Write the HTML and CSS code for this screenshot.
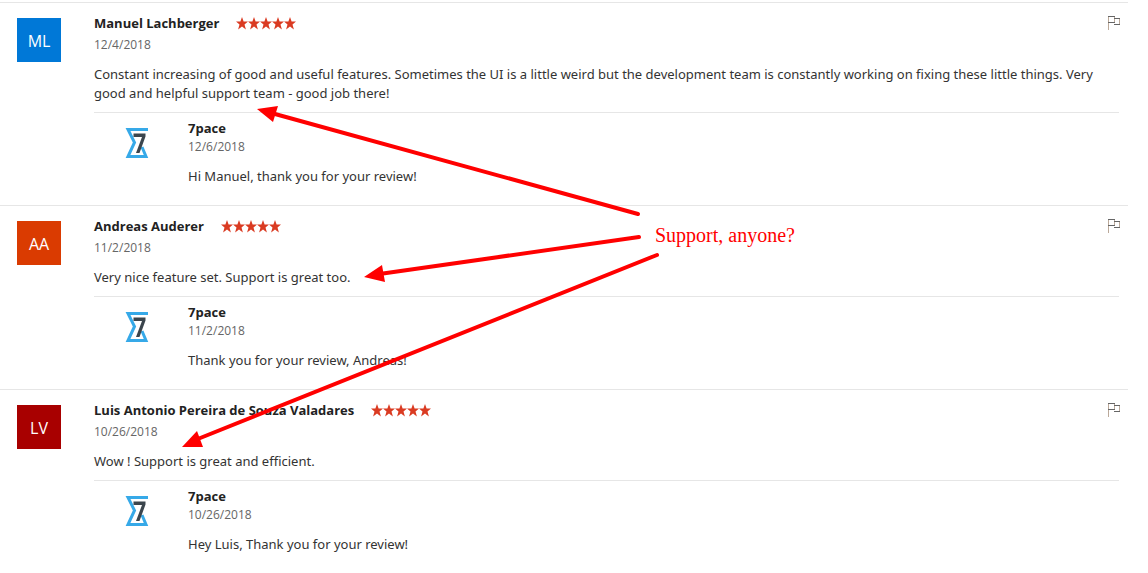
FILE: index.html
```html
<!DOCTYPE html>
<html lang="en">
<head>
  <meta charset="UTF-8" />
  <meta name="viewport" content="width=device-width, initial-scale=1.0" />
  <title>Reviews</title>
  <link rel="stylesheet" href="styles.css">
</head>
<body>
  <svg class="symbols" aria-hidden="true">
    <symbol id="stars" viewBox="0 0 60 14">
      <path id="star" d="M6 1L7.6 5.500H12L8.500 8.600L9.900 13.500L6 10.600L2.100 13.500L3.500 8.600L0 5.500H4.400Z" />
      <use href="#star" x="12" />
      <use href="#star" x="24" />
      <use href="#star" x="36" />
      <use href="#star" x="48" />
    </symbol>
    <symbol id="flag" viewBox="0 0 14 16">
      <path class="flag-pole" d="M1.500 1V15M7.500 1.500V7.500M12.500 3.500V9.500" />
      <path d="M1 1.500H8M1 7.500H8M7 3.500H13M7 9.500H13" />
    </symbol>
    <symbol id="logo" viewBox="0 0 24 32">
      <path class="logo-glass" d="M23 2.500H3L9.500 15.500L3 29.500H21L17 20" />
      <path class="logo-seven" d="M8.500 6.500H20.500V9.500L14.500 26H11L17 10H8.500Z" />
    </symbol>
  </svg>

  <main class="reviews">
    <article class="review">
      <div class="avatar avatar-blue">ML</div>
      <div class="review-body">
        <header class="review-header">
          <h2>Manuel Lachberger</h2>
          <svg class="stars" role="img" aria-label="5 stars"><use href="#stars" /></svg>
          <button class="flag" type="button" aria-label="Report review"><svg><use href="#flag" /></svg></button>
        </header>
        <time class="date">12/4/2018</time>
        <p>Constant increasing of good and useful features. Sometimes the UI is a little weird but the development team is constantly working on fixing these little things. Very good and helpful support team - good job there!</p>
        <section class="reply">
          <svg class="logo" aria-hidden="true"><use href="#logo" /></svg>
          <div class="reply-body">
            <h3>7pace</h3>
            <time class="date">12/6/2018</time>
            <p>Hi Manuel, thank you for your review!</p>
          </div>
        </section>
      </div>
    </article>

    <article class="review">
      <div class="avatar avatar-orange">AA</div>
      <div class="review-body">
        <header class="review-header">
          <h2>Andreas Auderer</h2>
          <svg class="stars" role="img" aria-label="5 stars"><use href="#stars" /></svg>
          <button class="flag" type="button" aria-label="Report review"><svg><use href="#flag" /></svg></button>
        </header>
        <time class="date">11/2/2018</time>
        <p>Very nice feature set. Support is great too.</p>
        <section class="reply">
          <svg class="logo" aria-hidden="true"><use href="#logo" /></svg>
          <div class="reply-body">
            <h3>7pace</h3>
            <time class="date">11/2/2018</time>
            <p>Thank you for your review, Andreas!</p>
          </div>
        </section>
      </div>
    </article>

    <article class="review">
      <div class="avatar avatar-red">LV</div>
      <div class="review-body">
        <header class="review-header">
          <h2>Luis Antonio Pereira de Souza Valadares</h2>
          <svg class="stars" role="img" aria-label="5 stars"><use href="#stars" /></svg>
          <button class="flag" type="button" aria-label="Report review"><svg><use href="#flag" /></svg></button>
        </header>
        <time class="date">10/26/2018</time>
        <p>Wow ! Support is great and efficient.</p>
        <section class="reply">
          <svg class="logo" aria-hidden="true"><use href="#logo" /></svg>
          <div class="reply-body">
            <h3>7pace</h3>
            <time class="date">10/26/2018</time>
            <p>Hey Luis, Thank you for your review!</p>
          </div>
        </section>
      </div>
    </article>
  </main>

  <!-- annotation on top of the reviews -->
  <svg class="arrows" width="680" height="460" aria-hidden="true">
    <path class="arrow-line" d="M638 214L275 114M639 237L383 273.500M657 255L199 438.500" />
    <path class="arrow-head" d="M257 109L278 106L273 122ZM364 277L382 265L385 282ZM182 447L197 431L203 447Z" />
  </svg>
  <div class="note">Support, anyone?</div>
</body>
</html>
```
FILE: styles.css
```css
body {
  margin: 0;
  position: relative;
  background-color: #fff;
  font-family: 'Segoe UI', 'Noto Sans', sans-serif;
  font-size: 13px;
  color: #333;
}

.symbols {
  display: none;
}

.reviews {
  padding-top: 2px;
  margin-right: 20px;
}

.review {
  display: flex;
  gap: 33px;
  padding: 10px 9px 19px 17px;
  border-top: 1px solid #e6e6e6;
}

.avatar {
  flex: none;
  width: 44px;
  height: 44px;
  margin-top: 5px;
  line-height: 46px;
  text-align: center;
  font-family: 'Segoe UI', 'Open Sans', sans-serif;
  font-size: 16px;
  color: #fff;
}

.avatar-blue {
  background-color: #0078d7;
}

.avatar-orange {
  background-color: #da3b01;
}

.avatar-red {
  background-color: #a80000;
}

.review-body {
  flex: 1;
}

.review-header {
  display: flex;
  align-items: center;
  gap: 17px;
  height: 20px;
}

h2,
h3 {
  margin: 0;
  font-family: 'Segoe UI', 'Open Sans', sans-serif;
  font-size: 13px;
  font-weight: 700;
  line-height: 20px;
  color: #222;
}

h3 {
  line-height: 18px;
}

.stars {
  width: 60px;
  height: 14px;
  fill: #da3b22;
}

.flag {
  margin-left: auto;
  margin-right: -2px;
  padding: 0;
  width: 14px;
  height: 16px;
  border: 0;
  background: none;
}

.flag svg {
  display: block;
  width: 14px;
  height: 16px;
  fill: none;
  stroke: #666;
}

.flag-pole {
  stroke: #bba99a;
}

.date {
  display: block;
  margin-top: 3px;
  font-family: 'Segoe UI', 'Open Sans', sans-serif;
  font-size: 12px;
  line-height: 18px;
  color: #666;
}

p {
  margin: 11px 0 0;
  line-height: 19px;
}

.reply {
  display: flex;
  gap: 39px;
  margin-top: 9px;
  padding: 6px 0 0 31px;
  border-top: 1px solid #e6e6e6;
}

.reply .date {
  margin-top: 1px;
}

.logo {
  flex: none;
  width: 24px;
  height: 32px;
  margin-top: 8px;
}

.logo-glass {
  fill: none;
  stroke: #36a9e8;
  stroke-width: 3;
}

.logo-seven {
  fill: #3b454d;
}

.arrows {
  position: absolute;
  top: 0;
  left: 0;
  pointer-events: none;
}

.arrow-line {
  fill: none;
  stroke: #f00;
  stroke-width: 4;
  stroke-linecap: round;
}

.arrow-head {
  fill: #f00;
}

.note {
  position: absolute;
  top: 224px;
  left: 655px;
  font-family: 'Liberation Serif', serif;
  font-size: 20px;
  line-height: 22px;
  color: #f00;
}
```
